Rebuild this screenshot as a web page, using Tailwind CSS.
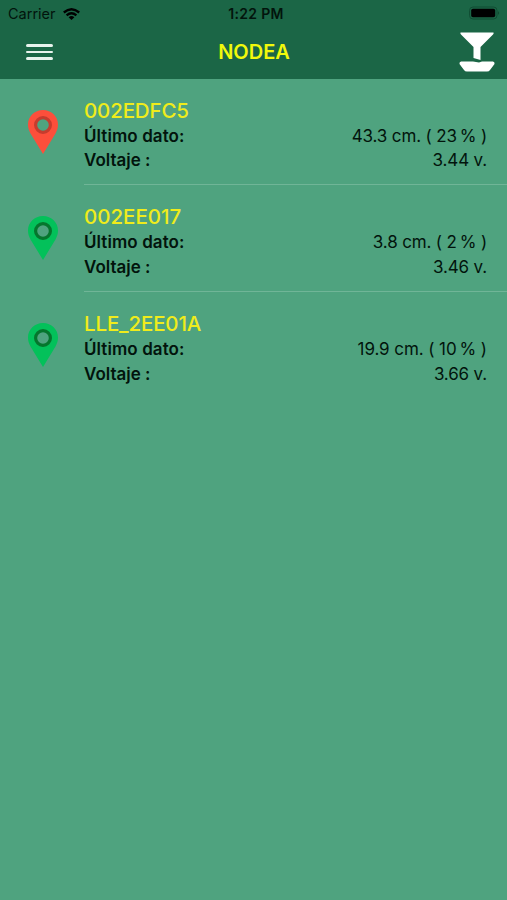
<!DOCTYPE html>
<html lang="es">
<head>
<meta charset="utf-8">
<title>NODEA</title>
<script src="https://cdn.jsdelivr.net/npm/@tailwindcss/browser@4"></script>
</head>
<body class="bg-[#4fa37f] font-['Inter','Liberation_Sans',sans-serif] text-[#02140c]">
<svg class="hidden">
  <symbol id="pin" viewBox="0 0 30 44">
    <path fill="currentColor" fill-rule="evenodd" d="M15 0C6.500 0 0 6.500 0 14.500C0 18 1 20.500 2.500 23.500L15 44L27.500 23.500C29 20.500 30 18 30 14.500C30 6.500 23.500 0 15 0ZM15 8.500a6.500 6.500 0 1 1 0 13a6.500 6.500 0 0 1 0-13Z"/>
    <circle cx="15" cy="15" r="7.400" fill="none" stroke="var(--ring)" stroke-width="3.200"/>
  </symbol>
</svg>
<div class="flex h-[900px] w-[507px] flex-col overflow-hidden whitespace-nowrap">
  <header class="h-[79px] shrink-0 bg-[#1b6646]">
    <div class="grid h-[27px] grid-cols-3 items-center pl-2 pr-[6px] text-sm leading-none">
      <div class="flex items-center gap-[7px]">
        <span class="pt-px text-[14.500px]">Carrier</span>
        <svg class="h-[12px] w-[17px]" viewBox="0 0 17 12" fill="none" stroke="#000" stroke-width="2.300">
          <path d="M.8 4.500Q8.500-2 16.200 4.500M3.600 7.400Q8.500 3.200 13.400 7.400"/>
          <path fill="#000" stroke="none" d="M5.600 9.200Q8.500 6.800 11.400 9.200L8.500 12Z"/>
        </svg>
      </div>
      <div class="pl-[3px] text-center text-[14px] font-semibold tracking-[0.300px]">1:22 PM</div>
      <svg class="h-[15px] w-[32px] justify-self-end" viewBox="0 0 32 15">
        <rect x=".5" y="1" width="27.500" height="12" rx="3.500" fill="none" stroke="#104d33"/>
        <rect x="2.200" y="2.700" width="24" height="8.600" rx="1.800" fill="#000"/>
        <path d="M29.300 5q1.700 2 0 4z" fill="#0c3d28"/>
      </svg>
    </div>
    <div class="grid h-[50px] grid-cols-3 items-center pl-[26px] pr-[12px]">
      <div class="flex w-[27px] flex-col gap-[4px]">
        <div class="h-[2.500px] rounded-sm bg-[#e8f3ed]"></div>
        <div class="h-[2.500px] rounded-sm bg-[#e8f3ed]"></div>
        <div class="h-[2.500px] rounded-sm bg-[#e8f3ed]"></div>
      </div>
      <div class="-ml-[13px] text-center text-[20px] font-semibold leading-none text-[#f2f90b]">NODEA</div>
      <svg class="h-[40px] w-[36px] justify-self-end" viewBox="0 0 36 40" fill="#fff">
        <path d="M1.500.5H34.500Q35 1.500 34 2.500L21.500 15V28L14.500 26V15L2 2.500Q1 1.500 1.500.5Z"/>
        <path d="M2 29.500H14L20 30.500L23 29.500H34Q36 30 35.500 32L31 38Q30 39.500 28 39.500H8Q6 39.500 5 38L.5 32Q0 30 2 29.500Z"/>
      </svg>
    </div>
  </header>
  <main class="text-[17px] leading-[24.500px]">
    <section class="flex h-[106px] pl-[28px]">
      <svg class="mt-[30.500px] h-[44px] w-[30px] shrink-0 text-[#fd4f3b] [--ring:#c63c2e]"><use href="#pin"/></svg>
      <div class="ml-[26px] flex-1 border-b border-[#70b597] pr-[20px] pt-[18.500px]">
        <h2 class="pb-px text-[20.500px] leading-[25px] tracking-[-0.150px] font-medium text-[#f0ec1b]">002EDFC5</h2>
        <div class="flex justify-between"><span class="font-semibold tracking-[0.080px]">Último dato:</span><span class="tracking-[-0.150px]">43.3 cm. ( 23<span class="ml-[3px]">%</span> )</span></div>
        <div class="flex justify-between"><span class="font-semibold">Voltaje :</span><span class="tracking-[-0.150px]">3.44 v.</span></div>
      </div>
    </section>
    <section class="flex h-[107px] pl-[28px]">
      <svg class="mt-[31px] h-[44px] w-[30px] shrink-0 text-[#03c15a] [--ring:#05762d]"><use href="#pin"/></svg>
      <div class="ml-[26px] flex-1 border-b border-[#70b597] pr-[20px] pt-[19px]">
        <h2 class="pb-px text-[20.500px] leading-[25px] font-medium text-[#f0ec1b]">002EE017</h2>
        <div class="flex justify-between"><span class="font-semibold tracking-[0.080px]">Último dato:</span><span class="tracking-[-0.150px]">3.8 cm. ( 2<span class="ml-[3px]">%</span> )</span></div>
        <div class="flex justify-between"><span class="font-semibold">Voltaje :</span><span class="tracking-[-0.150px]">3.46 v.</span></div>
      </div>
    </section>
    <section class="flex h-[106.500px] pl-[28px]">
      <svg class="mt-[30.500px] h-[44px] w-[30px] shrink-0 text-[#03c15a] [--ring:#05762d]"><use href="#pin"/></svg>
      <div class="ml-[26px] flex-1 pr-[20px] pt-[19px]">
        <h2 class="pb-px text-[20.500px] leading-[25px] tracking-[-0.150px] font-medium text-[#f0ec1b]">LLE_2EE01A</h2>
        <div class="flex justify-between"><span class="font-semibold tracking-[0.080px]">Último dato:</span><span class="tracking-[-0.080px]">19.9 cm. ( 10<span class="ml-[3px]">%</span> )</span></div>
        <div class="flex justify-between"><span class="font-semibold">Voltaje :</span><span class="tracking-[-0.150px]">3.66 v.</span></div>
      </div>
    </section>
  </main>
</div>
</body>
</html>
